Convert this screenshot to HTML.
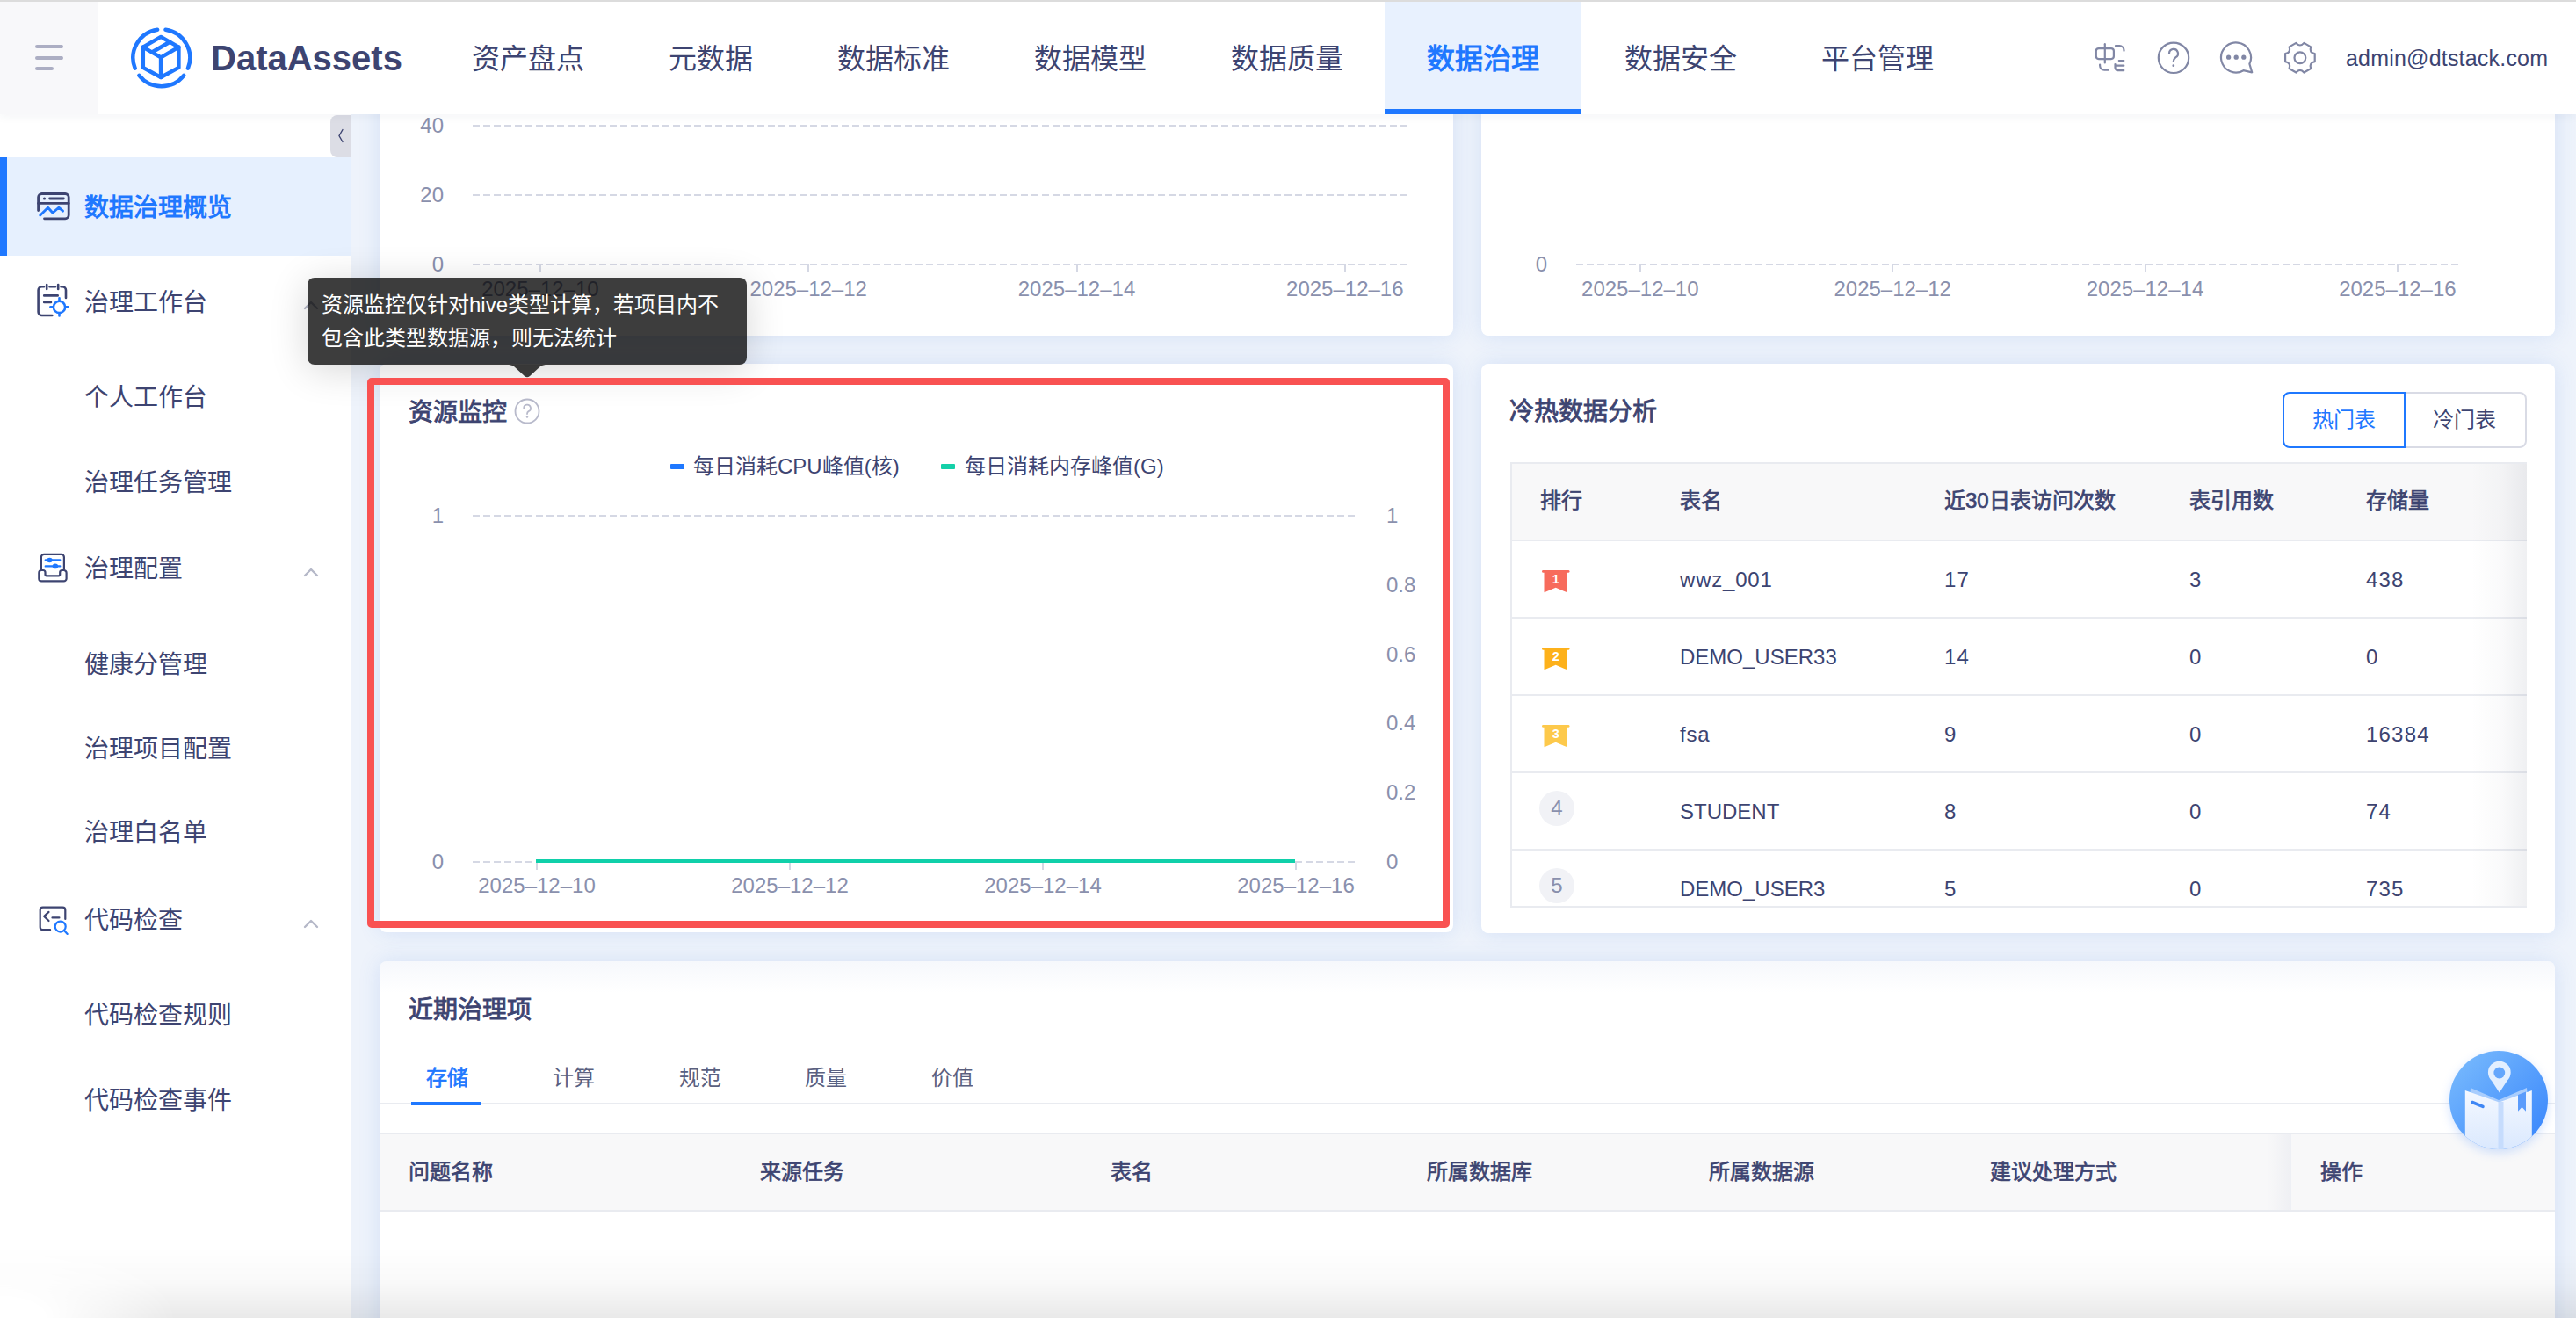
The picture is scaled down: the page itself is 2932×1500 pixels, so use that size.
<!DOCTYPE html>
<html lang="zh-CN"><head><meta charset="utf-8"><style>
*{box-sizing:border-box;margin:0;padding:0}
html,body{width:2932px;height:1500px;overflow:hidden;background:#fff}
body{font-family:"Liberation Sans",sans-serif;color:#3d4471;position:relative}
.a{position:absolute;white-space:nowrap}
.t{position:absolute;white-space:nowrap}
#topline{left:0;top:0;width:2932px;height:2px;background:#dcdcdc;z-index:20}
#header{left:0;top:0;width:2932px;height:130px;background:#fff;z-index:5;box-shadow:0 3px 10px rgba(40,50,90,0.05)}
#hamb{left:0;top:0;width:112px;height:130px;background:#f8f8fa}
.hl{position:absolute;left:40px;height:4px;border-radius:2px;background:#acaec3}
.nav{position:absolute;top:2px;height:128px;line-height:131px;font-size:32px;color:#3d4471;text-align:center}
.nav.on{background:#e8f1fe;color:#1f78ff;font-weight:bold}
.nav.on:after{content:"";position:absolute;left:0;right:0;bottom:0;height:6px;background:#1f78ff}
#sidebar{left:0;top:130px;width:400px;height:1370px;background:#fff;z-index:3}
#main{left:400px;top:130px;width:2532px;height:1370px;background:#eef3fb;z-index:1;overflow:hidden}
.card{position:absolute;background:#fff;border-radius:8px;box-shadow:0 0 24px rgba(60,120,220,0.15)}
.mi{position:absolute;left:0;width:400px;height:96px;font-size:28px;line-height:96px;color:#3d4471}
.mi .t{left:96px;top:0}
.ax{position:absolute;font-size:24px;color:#8a90ad;line-height:30px;white-space:nowrap}
.grid{position:absolute;height:2px;background-image:linear-gradient(to right,#d5d8e4 0,#d5d8e4 8px,transparent 8px);background-size:12px 2px}
.tick{position:absolute;width:2px;height:9px;background:#d5d8e4}
.title{position:absolute;font-size:28px;font-weight:normal;-webkit-text-stroke:0.9px #3d4471;color:#3d4471;line-height:40px;white-space:nowrap;margin-top:2px}
.th{position:absolute;font-size:24px;font-weight:normal;-webkit-text-stroke:0.7px #3d4471;color:#3d4471;line-height:30px;white-space:nowrap}
.td{position:absolute;font-size:24px;color:#3d4471;line-height:30px;white-space:nowrap}
</style></head><body>
<div id="topline" class="a"></div>
<div id="header" class="a">
<div id="hamb" class="a"><div class="hl" style="top:51px;width:32px"></div><div class="hl" style="top:64px;width:32px"></div><div class="hl" style="top:76px;width:21px"></div></div>
<svg class="a" style="left:146px;top:28px" width="76" height="76" viewBox="146 28 76 76">
<g fill="none" stroke="#1f78ff" stroke-width="4.5" stroke-linecap="round" stroke-linejoin="round">
<path d="M188.48 33.74 A32.4 32.4 0 0 1 213.90 77.78"/><path d="M209.23 85.88 A32.4 32.4 0 0 1 158.37 85.88"/><path d="M153.70 77.78 A32.4 32.4 0 0 1 179.12 33.74"/>
<path d="M183.1 41.9 L203.4 53.6 L203.4 76.9 L183.1 88.0 L162.8 76.9 L162.8 53.6 Z"/>
<path d="M162.8 53.6 L183.1 65.4 L203.4 53.6 M183.1 65.4 L183.1 88.0"/>
<path d="M172.95 59.50 L193.25 47.75"/>
</g></svg>
<div class="t" style="left:240px;top:38px;font-size:40px;font-weight:bold;color:#3d4471;line-height:56px;letter-spacing:0px">DataAssets</div>
<div class="nav" style="left:489px;width:224px">资产盘点</div>
<div class="nav" style="left:713px;width:192px">元数据</div>
<div class="nav" style="left:905px;width:224px">数据标准</div>
<div class="nav" style="left:1129px;width:224px">数据模型</div>
<div class="nav" style="left:1353px;width:224px">数据质量</div>
<div class="nav on" style="left:1576px;width:223px">数据治理</div>
<div class="nav" style="left:1801px;width:224px">数据安全</div>
<div class="nav" style="left:2025px;width:224px">平台管理</div>
<svg class="a" style="left:2370px;top:35px" width="280" height="65" viewBox="2370 35 280 65">
<g fill="none" stroke="#8187a5" stroke-width="2.2" stroke-linecap="round" stroke-linejoin="round">
<rect x="2385.8" y="55.1" width="20.1" height="12" rx="3"/>
<path d="M2395.8 50.2 V71.4"/>
<path d="M2408 52.2 H2412.5 A5 5 0 0 1 2417.5 57.2 V57.8"/>
<path d="M2390.1 73.6 V74.6 A5 5 0 0 0 2395.1 79.6 H2399.9"/>
<path d="M2411.8 69 H2417.3 M2407.5 74.7 H2417.3 M2417.3 80.1 H2410.5 A3 3 0 0 1 2407.5 77.1 V73"/>
<circle cx="2474" cy="65.8" r="17.2"/>
<path d="M2469 60.8 A5 5 0 1 1 2476.3 65.3 C2474.6 66.5 2473.8 67.6 2473.8 70"/>
<path d="M2553.5 80.2 A17 17 0 1 1 2560.4 72.7 L2563.2 82.3 Z" />
</g>
<g fill="#8187a5"><circle cx="2473.8" cy="74.7" r="1.4"/><circle cx="2536.6" cy="65.2" r="2.6"/><circle cx="2545.2" cy="65.2" r="2.6"/><circle cx="2553.8" cy="65.2" r="2.6"/></g>
<g fill="none" stroke="#8187a5" stroke-width="2.2" stroke-linejoin="round">
<path d="M2634.71 61.20 L2634.71 70.20 Q2627.95 71.50 2630.20 78.00 L2622.40 82.51 Q2617.90 77.30 2613.40 82.51 L2605.60 78.00 Q2607.85 71.50 2601.09 70.20 L2601.09 61.20 Q2607.85 59.90 2605.60 53.40 L2613.40 48.89 Q2617.90 54.10 2622.40 48.89 L2630.20 53.40 Q2627.95 59.90 2634.71 61.20 Z"/>
<circle cx="2617.9" cy="65.7" r="6.4"/>
</g>
</svg>
<div class="t" style="left:2670px;top:50px;font-size:25px;letter-spacing:0.2px;color:#3d4471;line-height:32px">admin@dtstack.com</div>
</div>
<div id="sidebar" class="a">
<div class="a" style="left:376px;top:1px;width:24px;height:48px;background:#dcdde5;border-radius:8px 0 0 8px"></div>
<svg class="a" style="left:383px;top:15px" width="12" height="20" viewBox="0 0 12 20"><path d="M7 2.5 L3 9.5 L7 16.5" fill="none" stroke="#3d4471" stroke-width="1.4" stroke-linecap="round"/></svg>
<div class="a" style="left:0;top:49px;width:400px;height:112px;background:#e6f0fe"></div>
<div class="a" style="left:0;top:49px;width:8px;height:112px;background:#1f78ff"></div>
<div class="t" style="left:96px;top:87px;font-size:28px;line-height:40px;color:#1f78ff;font-weight:bold">数据治理概览</div>
<div class="t" style="left:96px;top:195px;font-size:28px;line-height:40px;color:#3d4471;font-weight:normal">治理工作台</div>
<div class="t" style="left:96px;top:303px;font-size:28px;line-height:40px;color:#3d4471;font-weight:normal">个人工作台</div>
<div class="t" style="left:96px;top:400px;font-size:28px;line-height:40px;color:#3d4471;font-weight:normal">治理任务管理</div>
<div class="t" style="left:96px;top:498px;font-size:28px;line-height:40px;color:#3d4471;font-weight:normal">治理配置</div>
<div class="t" style="left:96px;top:607px;font-size:28px;line-height:40px;color:#3d4471;font-weight:normal">健康分管理</div>
<div class="t" style="left:96px;top:703px;font-size:28px;line-height:40px;color:#3d4471;font-weight:normal">治理项目配置</div>
<div class="t" style="left:96px;top:798px;font-size:28px;line-height:40px;color:#3d4471;font-weight:normal">治理白名单</div>
<div class="t" style="left:96px;top:898px;font-size:28px;line-height:40px;color:#3d4471;font-weight:normal">代码检查</div>
<div class="t" style="left:96px;top:1006px;font-size:28px;line-height:40px;color:#3d4471;font-weight:normal">代码检查规则</div>
<div class="t" style="left:96px;top:1103px;font-size:28px;line-height:40px;color:#3d4471;font-weight:normal">代码检查事件</div>
<svg class="a" style="left:344px;top:210px" width="20" height="14" viewBox="0 0 20 14"><path d="M3 11 L10 4 L17 11" fill="none" stroke="#b5b8c8" stroke-width="2.4" stroke-linecap="round" stroke-linejoin="round"/></svg>
<svg class="a" style="left:344px;top:514px" width="20" height="14" viewBox="0 0 20 14"><path d="M3 11 L10 4 L17 11" fill="none" stroke="#b5b8c8" stroke-width="2.4" stroke-linecap="round" stroke-linejoin="round"/></svg>
<svg class="a" style="left:344px;top:914px" width="20" height="14" viewBox="0 0 20 14"><path d="M3 11 L10 4 L17 11" fill="none" stroke="#b5b8c8" stroke-width="2.4" stroke-linecap="round" stroke-linejoin="round"/></svg>
<svg class="a" style="left:30px;top:70px" width="70" height="1000" viewBox="30 200 70 1000">
<g fill="none" stroke="#3d4471" stroke-width="2.8" stroke-linecap="round" stroke-linejoin="round">
<path d="M43.6 239.6 V224.5 A4 4 0 0 1 47.6 220.5 H74.2 A4 4 0 0 1 78.2 224.5 V244.8 A4 4 0 0 1 74.2 248.8 H50.5"/>
<path d="M43.6 231.4 H78.2"/>
<path d="M56.6 226 H72.3"/>
</g>
<circle cx="50.5" cy="226" r="1.6" fill="#3d4471"/>
<path d="M45.7 245 L54.6 236.2 L60 242.3 L66.8 236.2 L71.6 240.2" fill="none" stroke="#1f78ff" stroke-width="2.8" stroke-linecap="round" stroke-linejoin="round"/>
<g fill="none" stroke="#3d4471" stroke-width="2.6" stroke-linecap="round" stroke-linejoin="round">
<path d="M59.3 359 H47.6 A4 4 0 0 1 43.6 355 V330.2 A4 4 0 0 1 47.6 326.2 H50"/>
<path d="M53.2 324 V329 M66.2 324 V329 M56.5 326.2 H63"/>
<path d="M69.5 326.2 H71 A4 4 0 0 1 75 330.2 V339"/>
<path d="M50.2 336.4 H65.7 M50.2 344 H58"/>
</g>
<g fill="none" stroke="#1f78ff" stroke-width="2.6" stroke-linecap="round">
<circle cx="67.5" cy="349.4" r="6.6"/>
<path d="M67.5 339.3 V342.5 M67.5 356.3 V359.5 M57.4 349.4 H60.6 M74.4 349.4 H77.6"/>
</g>
<g fill="none" stroke="#3d4471" stroke-width="2.2" stroke-linecap="round" stroke-linejoin="round">
<path d="M46.9 648 V634 A3.2 3.2 0 0 1 50.1 630.8 H69.7 A3.2 3.2 0 0 1 72.9 634 V648"/>
<path d="M44.3 652 A3 3 0 0 1 47.3 649 H49 A2.5 2.5 0 0 1 51.5 651.5 V653.8 A1.5 1.5 0 0 0 53 655.3 H66.7 A1.5 1.5 0 0 0 68.2 653.8 V651.5 A2.5 2.5 0 0 1 70.7 649 H72.6 A3 3 0 0 1 75.6 652 V658.4 A3 3 0 0 1 72.6 661.4 H47.3 A3 3 0 0 1 44.3 658.4 Z"/>
</g>
<g stroke="#1f78ff" stroke-width="2.4" stroke-linecap="round" fill="#1f78ff">
<path d="M51.8 637.5 H68.2 M51.8 644.4 H68.2"/>
<ellipse cx="56.5" cy="637.5" rx="2" ry="1.6"/><ellipse cx="62.9" cy="644.4" rx="2" ry="1.6"/>
</g>
<g fill="none" stroke="#3d4471" stroke-width="2.2" stroke-linecap="round" stroke-linejoin="round">
<path d="M57.1 1058.2 H48.7 A3 3 0 0 1 45.7 1055.2 V1035.7 A3 3 0 0 1 48.7 1032.7 H71.3 A3 3 0 0 1 74.3 1035.7 V1046"/>
<path d="M55.5 1037.9 L50.2 1042.9 L55.5 1048"/>
<path d="M59.5 1044.4 H67.4"/>
</g>
<g fill="none" stroke="#1f78ff" stroke-width="2.2" stroke-linecap="round">
<circle cx="68.7" cy="1054.6" r="6"/>
<path d="M73 1058.9 L76.7 1062.9"/>
</g>
</svg>
</div>
<div id="main" class="a">
<div class="card" style="left:32px;top:-40px;width:1222px;height:292px;"></div>
<div class="card" style="left:1286px;top:-40px;width:1222px;height:292px;"></div>
<div class="card" style="left:32px;top:284px;width:1222px;height:647px;"></div>
<div class="card" style="left:1286px;top:284px;width:1222px;height:648px;"></div>
<div class="card" style="left:32px;top:964px;width:2476px;height:506px;background:linear-gradient(to bottom,#f6f8fc 0,#fff 36px)"></div>
<div class="ax" style="left:-95px;top:-2px;width:200px;text-align:right">40</div>
<div class="grid" style="left:137.5px;top:12px;width:1065.0px"></div>
<div class="ax" style="left:-95px;top:76.5px;width:200px;text-align:right">20</div>
<div class="grid" style="left:137.5px;top:91px;width:1065.0px"></div>
<div class="ax" style="left:-95px;top:156px;width:200px;text-align:right">0</div>
<div class="grid" style="left:137.5px;top:170px;width:1065.0px"></div>
<div class="tick" style="left:213.89999999999998px;top:171px"></div>
<div class="ax" style="left:64.89999999999998px;top:184px;width:300px;text-align:center;letter-spacing:0px">2025–12–10</div>
<div class="tick" style="left:519.2px;top:171px"></div>
<div class="ax" style="left:370.20000000000005px;top:184px;width:300px;text-align:center;letter-spacing:0px">2025–12–12</div>
<div class="tick" style="left:824.5px;top:171px"></div>
<div class="ax" style="left:675.5px;top:184px;width:300px;text-align:center;letter-spacing:0px">2025–12–14</div>
<div class="tick" style="left:1129.8px;top:171px"></div>
<div class="ax" style="left:980.8px;top:184px;width:300px;text-align:center;letter-spacing:0px">2025–12–16</div>
<div class="ax" style="left:1161px;top:156px;width:200px;text-align:right">0</div>
<div class="grid" style="left:1393.5px;top:170px;width:1005.0px"></div>
<div class="tick" style="left:1465.8px;top:171px"></div>
<div class="ax" style="left:1316.8px;top:184px;width:300px;text-align:center;letter-spacing:0px">2025–12–10</div>
<div class="tick" style="left:1753.1999999999998px;top:171px"></div>
<div class="ax" style="left:1604.1999999999998px;top:184px;width:300px;text-align:center;letter-spacing:0px">2025–12–12</div>
<div class="tick" style="left:2040.5px;top:171px"></div>
<div class="ax" style="left:1891.5px;top:184px;width:300px;text-align:center;letter-spacing:0px">2025–12–14</div>
<div class="tick" style="left:2327.9px;top:171px"></div>
<div class="ax" style="left:2178.9px;top:184px;width:300px;text-align:center;letter-spacing:0px">2025–12–16</div>
<div class="title" style="left:65px;top:318px">资源监控</div>
<svg class="a" style="left:184px;top:322px" width="32" height="32" viewBox="0 0 32 32"><circle cx="16" cy="16" r="13.5" fill="none" stroke="#b8bacb" stroke-width="1.8"/><path d="M12.2 12.6 A3.9 3.9 0 1 1 17.6 16.1 C16.4 16.8 16 17.5 16 19" fill="none" stroke="#b8bacb" stroke-width="1.8" stroke-linecap="round"/><circle cx="16" cy="22.5" r="1.2" fill="#b8bacb"/></svg>
<div class="a" style="left:363px;top:398px;width:16px;height:6px;background:#1f78ff;border-radius:1px"></div>
<div class="td" style="left:389px;top:386px;color:#3d4471">每日消耗CPU峰值(核)</div>
<div class="a" style="left:671px;top:398px;width:16px;height:6px;background:#14d0a8;border-radius:1px"></div>
<div class="td" style="left:698px;top:386px;color:#3d4471">每日消耗内存峰值(G)</div>
<div class="ax" style="left:-95px;top:442px;width:200px;text-align:right">1</div>
<div class="ax" style="left:-95px;top:836px;width:200px;text-align:right">0</div>
<div class="grid" style="left:138px;top:456px;width:1004px"></div>
<div class="grid" style="left:138px;top:850px;width:1004px"></div>
<div class="ax" style="left:1178px;top:442px">1</div>
<div class="ax" style="left:1178px;top:520.8px">0.8</div>
<div class="ax" style="left:1178px;top:599.6px">0.6</div>
<div class="ax" style="left:1178px;top:678.4px">0.4</div>
<div class="ax" style="left:1178px;top:757.2px">0.2</div>
<div class="ax" style="left:1178px;top:836px">0</div>
<div class="tick" style="left:210px;top:851px"></div>
<div class="ax" style="left:61.0px;top:863px;width:300px;text-align:center;letter-spacing:0px">2025–12–10</div>
<div class="tick" style="left:498px;top:851px"></div>
<div class="ax" style="left:349.0px;top:863px;width:300px;text-align:center;letter-spacing:0px">2025–12–12</div>
<div class="tick" style="left:786px;top:851px"></div>
<div class="ax" style="left:637.0px;top:863px;width:300px;text-align:center;letter-spacing:0px">2025–12–14</div>
<div class="tick" style="left:1074px;top:851px"></div>
<div class="ax" style="left:925.0px;top:863px;width:300px;text-align:center;letter-spacing:0px">2025–12–16</div>
<div class="a" style="left:210px;top:848px;width:864px;height:4px;background:#10d0aa"></div>
<div class="title" style="left:1318px;top:317px">冷热数据分析</div>
<div class="a" style="left:2198px;top:316px;width:140px;height:64px;border:2px solid #1f78ff;border-radius:8px 0 0 8px;color:#1f78ff;font-size:24px;line-height:60px;text-align:center;z-index:2;background:#fff">热门表</div>
<div class="a" style="left:2336px;top:316px;width:140px;height:64px;border:2px solid #d9dbe5;border-left:none;border-radius:0 8px 8px 0;color:#3d4471;font-size:24px;line-height:60px;text-align:center">冷门表</div>
<div class="a" style="left:1319px;top:396px;width:1157px;height:507px;overflow:hidden;border-left:2px solid #e9ebf0;border-top:2px solid #e9ebf0;border-bottom:2px solid #e9ebf0">
<div class="a" style="left:0;top:0;width:1200px;height:88px;background:#f8f8f9;border-bottom:2px solid #e9ebf0"></div>
<div class="th" style="left:32px;top:27px">排行</div>
<div class="th" style="left:191px;top:27px">表名</div>
<div class="th" style="left:492px;top:27px">近30日表访问次数</div>
<div class="th" style="left:771px;top:27px">表引用数</div>
<div class="th" style="left:972px;top:27px">存储量</div>
<div class="a" style="left:0;top:174px;width:1200px;height:2px;background:#e9ebf0"></div>
<svg class="a" style="left:33.5px;top:121px" width="32" height="26" viewBox="0 0 32 26"><rect x="0" y="0" width="31.5" height="2.8" rx="1.4" fill="#f76b5c"/><path d="M2.5 2 H29 V24.6 Q29 25.4 28.2 25.1 L15.7 19.8 L3.3 25.1 Q2.5 25.4 2.5 24.6 Z" fill="#f76b5c"/><text x="15.9" y="15.4" text-anchor="middle" font-family="Liberation Sans" font-weight="bold" font-size="14.5" fill="#fff">1</text></svg>
<div class="td" style="left:191px;top:117px;letter-spacing:0.8px">wwz_001</div>
<div class="td" style="left:492px;top:117px;letter-spacing:1.2px">17</div>
<div class="td" style="left:771px;top:117px;letter-spacing:1.2px">3</div>
<div class="td" style="left:972px;top:117px;letter-spacing:1.2px">438</div>
<div class="a" style="left:0;top:262px;width:1200px;height:2px;background:#e9ebf0"></div>
<svg class="a" style="left:33.5px;top:209px" width="32" height="26" viewBox="0 0 32 26"><rect x="0" y="0" width="31.5" height="2.8" rx="1.4" fill="#fdb11b"/><path d="M2.5 2 H29 V24.6 Q29 25.4 28.2 25.1 L15.7 19.8 L3.3 25.1 Q2.5 25.4 2.5 24.6 Z" fill="#fdb11b"/><text x="15.9" y="15.4" text-anchor="middle" font-family="Liberation Sans" font-weight="bold" font-size="14.5" fill="#fff">2</text></svg>
<div class="td" style="left:191px;top:205px;letter-spacing:0px">DEMO_USER33</div>
<div class="td" style="left:492px;top:205px;letter-spacing:1.2px">14</div>
<div class="td" style="left:771px;top:205px;letter-spacing:1.2px">0</div>
<div class="td" style="left:972px;top:205px;letter-spacing:1.2px">0</div>
<div class="a" style="left:0;top:350px;width:1200px;height:2px;background:#e9ebf0"></div>
<svg class="a" style="left:33.5px;top:297px" width="32" height="26" viewBox="0 0 32 26"><rect x="0" y="0" width="31.5" height="2.8" rx="1.4" fill="#fdc94b"/><path d="M2.5 2 H29 V24.6 Q29 25.4 28.2 25.1 L15.7 19.8 L3.3 25.1 Q2.5 25.4 2.5 24.6 Z" fill="#fdc94b"/><text x="15.9" y="15.4" text-anchor="middle" font-family="Liberation Sans" font-weight="bold" font-size="14.5" fill="#fff">3</text></svg>
<div class="td" style="left:191px;top:293px;letter-spacing:0.8px">fsa</div>
<div class="td" style="left:492px;top:293px;letter-spacing:1.2px">9</div>
<div class="td" style="left:771px;top:293px;letter-spacing:1.2px">0</div>
<div class="td" style="left:972px;top:293px;letter-spacing:1.2px">16384</div>
<div class="a" style="left:0;top:438px;width:1200px;height:2px;background:#e9ebf0"></div>
<div class="a" style="left:31px;top:372px;width:40px;height:40px;border-radius:20px;background:#f1f2f6;color:#8a90ad;font-size:24px;line-height:40px;text-align:center">4</div>
<div class="td" style="left:191px;top:381px;letter-spacing:0px">STUDENT</div>
<div class="td" style="left:492px;top:381px;letter-spacing:1.2px">8</div>
<div class="td" style="left:771px;top:381px;letter-spacing:1.2px">0</div>
<div class="td" style="left:972px;top:381px;letter-spacing:1.2px">74</div>
<div class="a" style="left:0;top:526px;width:1200px;height:2px;background:#e9ebf0"></div>
<div class="a" style="left:31px;top:460px;width:40px;height:40px;border-radius:20px;background:#f1f2f6;color:#8a90ad;font-size:24px;line-height:40px;text-align:center">5</div>
<div class="td" style="left:191px;top:469px;letter-spacing:0px">DEMO_USER3</div>
<div class="td" style="left:492px;top:469px;letter-spacing:1.2px">5</div>
<div class="td" style="left:771px;top:469px;letter-spacing:1.2px">0</div>
<div class="td" style="left:972px;top:469px;letter-spacing:1.2px">735</div>
<div class="a" style="right:0;top:0;width:64px;height:600px;background:linear-gradient(to right,rgba(40,50,80,0) 0%,rgba(40,50,80,0.025) 55%,rgba(40,50,80,0.075) 100%)"></div>
</div>
<div class="title" style="left:65px;top:998px">近期治理项</div>
<div class="td" style="left:85px;top:1082px;color:#1f78ff;font-weight:normal;-webkit-text-stroke:0.7px #1f78ff">存储</div>
<div class="td" style="left:229px;top:1082px;color:#5a6080;font-weight:normal">计算</div>
<div class="td" style="left:373px;top:1082px;color:#5a6080;font-weight:normal">规范</div>
<div class="td" style="left:516px;top:1082px;color:#5a6080;font-weight:normal">质量</div>
<div class="td" style="left:660px;top:1082px;color:#5a6080;font-weight:normal">价值</div>
<div class="a" style="left:32px;top:1125px;width:2476px;height:2px;background:#e9ebf0"></div>
<div class="a" style="left:68px;top:1124px;width:80px;height:4px;background:#1f78ff"></div>
<div class="a" style="left:32px;top:1159px;width:2476px;height:90px;background:#f8f8f9;border-top:2px solid #e9ebf0;border-bottom:2px solid #e9ebf0"></div>
<div class="th" style="left:65px;top:1189px">问题名称</div>
<div class="th" style="left:465px;top:1189px">来源任务</div>
<div class="th" style="left:864px;top:1189px">表名</div>
<div class="th" style="left:1224px;top:1189px">所属数据库</div>
<div class="th" style="left:1544.5px;top:1189px">所属数据源</div>
<div class="th" style="left:1865px;top:1189px">建议处理方式</div>
<div class="th" style="left:2241px;top:1189px">操作</div>
<div class="a" style="left:2180px;top:1161px;width:28px;height:86px;background:linear-gradient(to right,rgba(0,0,0,0),rgba(60,80,140,0.05))"></div>
<div class="a" style="left:2206px;top:1161px;width:2px;height:86px;background:#eef0f5"></div>
</div>
<svg class="a" style="left:2768px;top:1176px;z-index:8" width="152" height="152" viewBox="2768 1176 152 152">
<defs>
<linearGradient id="fg" x1="0" y1="0" x2="1" y2="1"><stop offset="0" stop-color="#7cbdfd"/><stop offset="1" stop-color="#3583fc"/></linearGradient>
<linearGradient id="pg" x1="0" y1="0" x2="0" y2="1"><stop offset="0" stop-color="#f4f8ff"/><stop offset="1" stop-color="#d6e6fe"/></linearGradient>
<filter id="sh" x="-50%" y="-50%" width="200%" height="200%"><feGaussianBlur stdDeviation="6"/></filter>
<clipPath id="cc"><circle cx="2844" cy="1252" r="56"/></clipPath>
</defs>
<circle cx="2844" cy="1256" r="56" fill="#4d8ffc" opacity="0.25" filter="url(#sh)"/>
<circle cx="2844" cy="1252" r="56" fill="url(#fg)"/>
<g clip-path="url(#cc)">
<path d="M2812 1238 L2844 1252 L2876 1238 L2877 1250 L2844 1262 L2811 1250 Z" fill="#a9cdfd"/>
<path d="M2805.8 1241 L2844.5 1254.4 L2881.8 1241 V1320 H2805.8 Z" fill="url(#pg)"/>
<rect x="2843.5" y="1254" width="6" height="70" fill="#c6dcfd"/>
<path d="M2866 1246 L2875 1242.5 V1264.8 L2870.5 1260 L2866 1264.8 Z" fill="#5b9cfc"/>
<path d="M2814 1254.5 L2826 1259.3" stroke="#3f87f5" stroke-width="3.6" stroke-linecap="round"/>
</g>
<path d="M2844.8 1243.5 L2836 1230 A12.9 12.9 0 1 1 2853.6 1230 Z" fill="#e3efff"/>
<circle cx="2844.8" cy="1221" r="6.4" fill="#64a6fc"/>
</svg>
<div class="a" style="left:350px;top:316px;width:500px;height:99px;background:rgba(0,0,0,0.76);border-radius:8px;z-index:9;box-shadow:0 6px 44px rgba(0,0,0,0.16);color:#fff;font-size:24px;line-height:38px;padding:12px 0 0 16px;white-space:normal">资源监控仅针对hive类型计算，若项目内不<br>包含此类型数据源，则无法统计</div>
<svg class="a" style="left:577px;top:415px;z-index:9" width="46" height="15" viewBox="0 0 46 15"><path d="M0 0 H46 C43 0 40.5 0.4 38 2 L26 13 Q23 15.6 20 13 L8 2 C5.5 0.4 3 0 0 0 Z" fill="rgba(0,0,0,0.76)"/></svg>
<div class="a" style="left:418px;top:430px;width:1232px;height:626px;border:8px solid #f95252;border-radius:5px;z-index:40"></div>
<div class="a" style="left:0;top:1420px;width:2932px;height:80px;background:linear-gradient(to bottom,rgba(0,0,0,0),rgba(0,0,0,0.025) 50%,rgba(0,0,0,0.085));z-index:30;pointer-events:none;-webkit-mask-image:radial-gradient(ellipse 200px 90px at 0 100%,transparent 25%,#000 100%)"></div>
</body></html>
